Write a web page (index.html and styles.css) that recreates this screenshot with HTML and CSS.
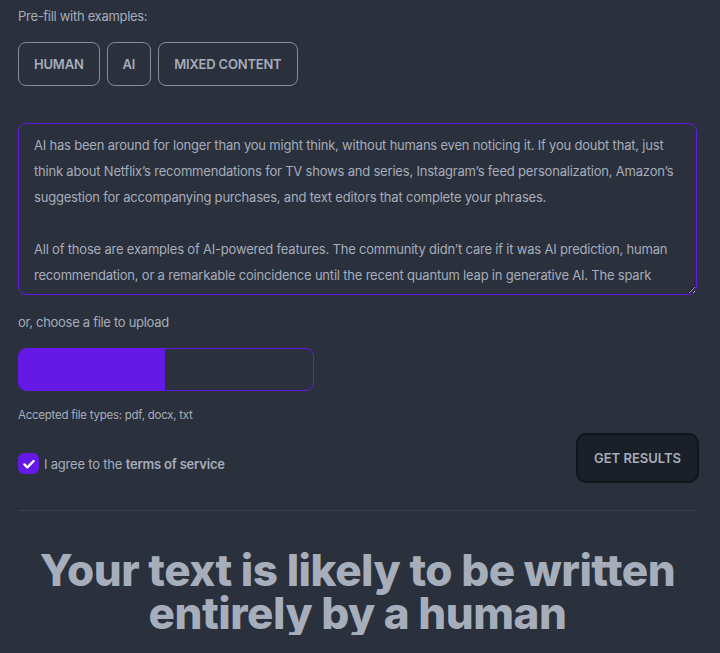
FILE: index.html
```html
<!doctype html>
<html lang="en">
<head>
  <meta charset="UTF-8">
  <meta name="viewport" content="width=device-width, initial-scale=1.0">
  <title>AI Detector</title>
  <link rel="stylesheet" href="styles.css">
</head>
<body>

  <main class="page">
    <p class="label">Pre-fill with examples:</p>

    <div class="examples">
      <button class="btn-outline" type="button">Human</button>
      <button class="btn-outline" type="button">AI</button>
      <button class="btn-outline" type="button">Mixed content</button>
    </div>

    <textarea class="text-input">AI has been around for longer than you might think, without humans even noticing it. If you doubt that, just think about Netflix’s recommendations for TV shows and series, Instagram’s feed personalization, Amazon’s suggestion for accompanying purchases, and text editors that complete your phrases.

All of those are examples of AI-powered features. The community didn’t care if it was AI prediction, human recommendation, or a remarkable coincidence until the recent quantum leap in generative AI. The spark came with the release of ChatGPT, which made it possible for anyone to write long texts in seconds.</textarea>

    <p class="label upload-label">or, choose a file to upload</p>

    <div class="file-input">
      <span class="file-btn"></span>
      <span class="file-name"></span>
    </div>

    <p class="hint">Accepted file types: pdf, docx, txt</p>

    <div class="submit-row">
      <label class="agree">
        <span class="checkbox">
          <svg viewBox="0 0 24 24" width="16" height="16">
            <path d="M5 12.5l4.5 4.5L19 7.5" fill="none" stroke="#fff" stroke-width="3.4" stroke-linecap="round" stroke-linejoin="round"/>
          </svg>
        </span>
        <span>I agree to the <b>terms of service</b></span>
      </label>
      <button class="btn-submit" type="button">Get results</button>
    </div>

    <hr class="divider">

    <h1 class="result">Your text is likely to be written entirely by a human</h1>
  </main>

</body>
</html>
```

FILE: styles.css
```css
body {
  margin: 0;
  background-color: #2a303c;
  color: #a6adbb;
  font-family: Inter, "Noto Sans", sans-serif;
}

.page {
  padding: 6px 23px 0 18px;
}

.label {
  margin: 0;
  font-size: 13px;
  line-height: 20px;
  letter-spacing: -0.3px;
}

/* Example buttons */
.examples {
  display: flex;
  gap: 7px;
  margin-top: 16px;
}

.btn-outline {
  height: 44px;
  padding: 0 15px;
  background: transparent;
  border: 1px solid #858b97;
  border-radius: 8px;
  color: #a6adbb;
  font-family: inherit;
  font-size: 13px;
  font-weight: 600;
  letter-spacing: -0.2px;
  text-transform: uppercase;
  cursor: pointer;
}

/* Text area */
.text-input {
  display: block;
  box-sizing: border-box;
  width: 100%;
  height: 172px;
  margin-top: 37px;
  padding: 8px 18px 8px 15px;
  background-color: #2a303c;
  border: 1px solid #6419e6;
  border-radius: 8px;
  color: #a6adbb;
  font-family: inherit;
  font-size: 13px;
  line-height: 26px;
  letter-spacing: -0.2px;
  overflow: hidden;
  resize: vertical;
  outline: none;
}

.upload-label {
  margin-top: 17px;
}

/* File picker */
.file-input {
  display: flex;
  box-sizing: border-box;
  width: 296px;
  height: 43px;
  margin-top: 16px;
  border: 1px solid #6419e6;
  border-radius: 8px;
  overflow: hidden;
}

.file-btn {
  width: 146px;
  background-color: #6419e6;
}

.file-name {
  flex: 1;
}

.hint {
  margin: 16px 0 0;
  font-size: 11.5px;
  line-height: 16px;
  letter-spacing: -0.25px;
}

/* Agree + submit */
.submit-row {
  display: flex;
  justify-content: space-between;
  align-items: flex-start;
  margin-top: 10px;
}

.agree {
  display: flex;
  align-items: center;
  gap: 5px;
  margin-top: 20px;
  font-size: 13px;
  line-height: 20px;
  letter-spacing: -0.2px;
}

.agree b {
  font-weight: 600;
}

.checkbox {
  display: flex;
  align-items: center;
  justify-content: center;
  width: 21px;
  height: 21px;
  background-color: #6419e6;
  border-radius: 6px;
}

.btn-submit {
  width: 123px;
  height: 50px;
  margin-right: -2px;
  background-color: #1b1f27;
  border: 2px solid #12151a;
  border-radius: 10px;
  color: #a6adbb;
  font-family: inherit;
  font-size: 13px;
  font-weight: 600;
  text-transform: uppercase;
  cursor: pointer;
}

.divider {
  margin: 27px 0 0;
  border: none;
  border-top: 1px solid #394150;
}

/* Result */
.result {
  margin: 38px 0 0;
  text-align: center;
  font-size: 44px;
  line-height: 43px;
  font-weight: 800;
  letter-spacing: -0.5px;
}
```
